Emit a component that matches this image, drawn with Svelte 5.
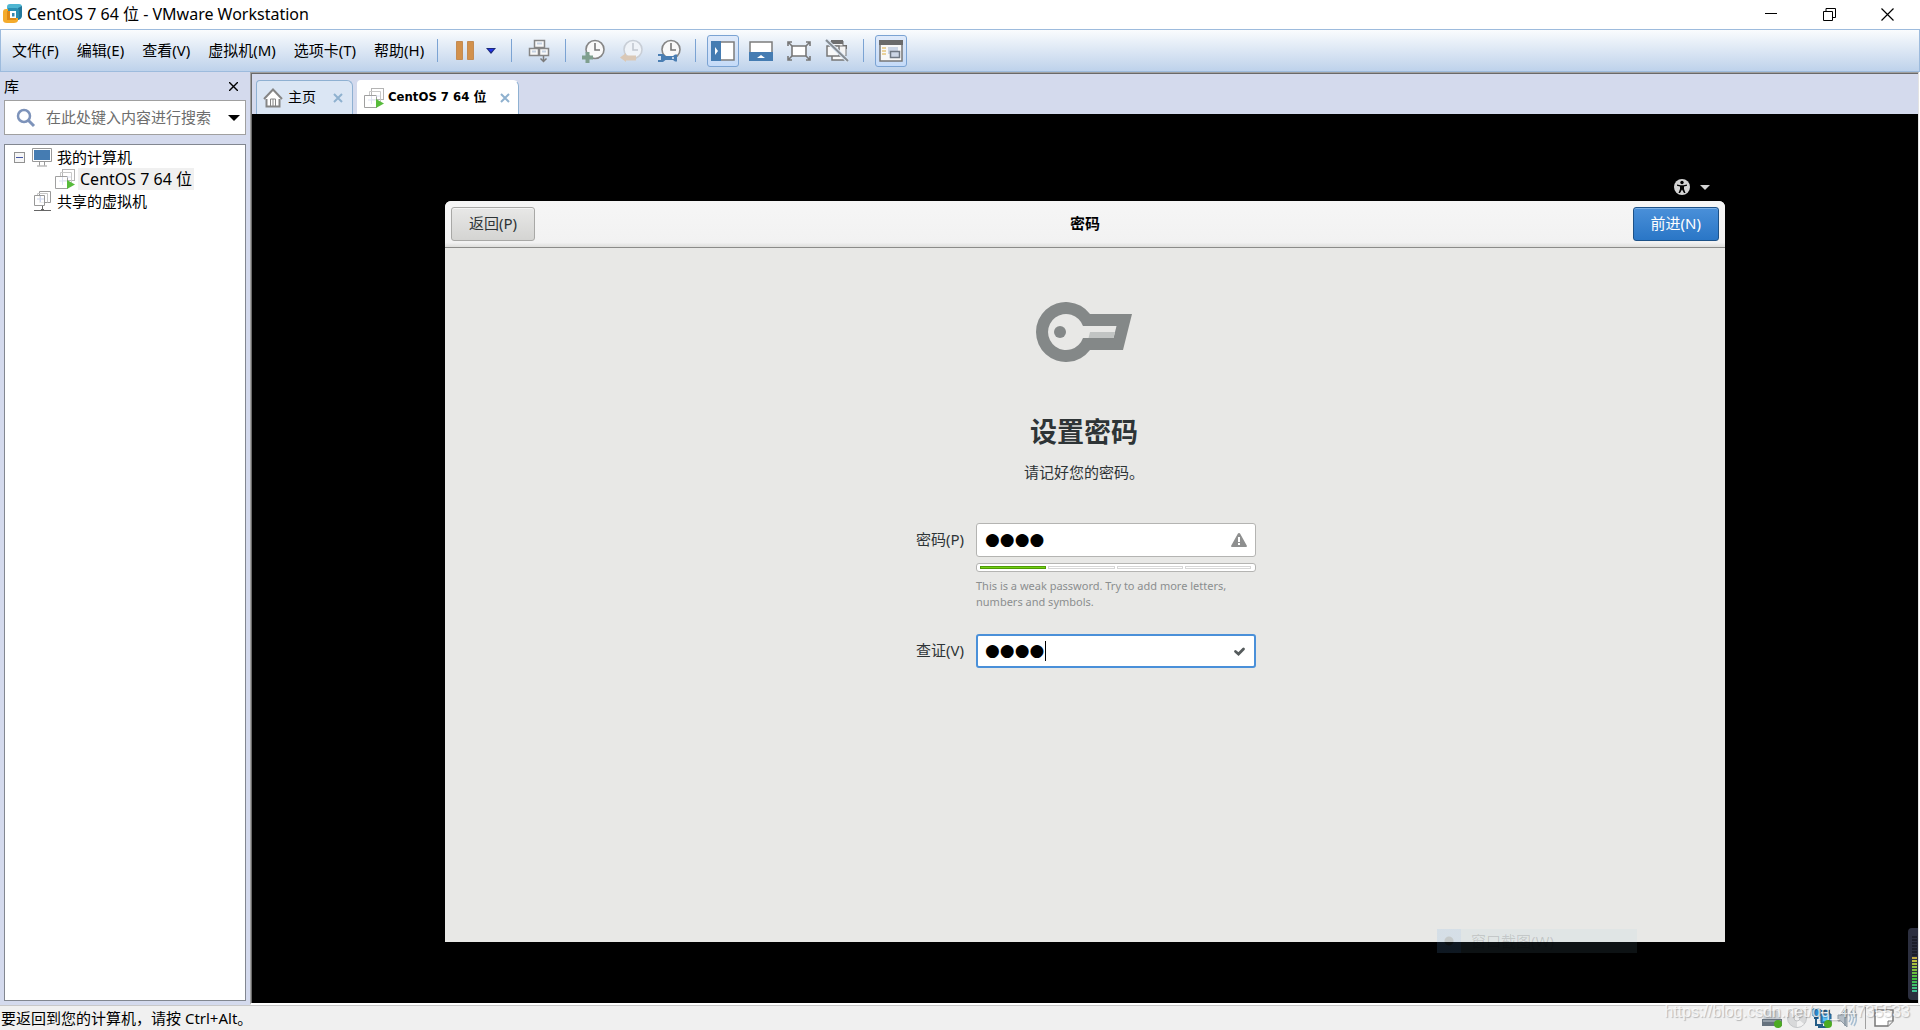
<script lang="ts">
  interface TreeNode {
    label: string;
    icon: 'monitor' | 'vm' | 'shared';
    depth: number;
    expandable?: boolean;
    selected?: boolean;
  }

  const menus = ['文件(F)', '编辑(E)', '查看(V)', '虚拟机(M)', '选项卡(T)', '帮助(H)'];

  const tree: TreeNode[] = [
    { label: '我的计算机', icon: 'monitor', depth: 0, expandable: true },
    { label: 'CentOS 7 64 位', icon: 'vm', depth: 1, selected: true },
    { label: '共享的虚拟机', icon: 'shared', depth: 0 },
  ];

  const strengthSteps = [1, 2, 3, 4];
  const strength = 1;

  // level meter docked at the right edge: dark lines above, lit lines below
  const meter = Array.from({ length: 19 }, (_, i) =>
    i < 7 ? '#1c1e29' : `hsl(${50 + (i - 7) * 10}, 50%, 50%)`
  );

  let search = $state('');
  let password = $state('●●●●');
  let verify = $state('●●●●');
</script>

{#snippet vmIcon()}
  <svg class="vm-icon" width="20" height="20" viewBox="0 0 20 20" fill="none" aria-hidden="true">
    <rect x="7.5" y=".5" width="12" height="11" fill="#fff" stroke="#b4b4b4" />
    <path d="M5.500 8V3.500H16.500V14" stroke="#c8c8c8" />
    <path d="M.5 7.500H12.500V19.500H.5z" fill="#fff" fill-opacity=".8" stroke="#a0a0a0" />
    <path d="M4 12h8M7.500 8v8M12 8h4" stroke="#dde2f2" />
    <path d="M12 11l8 4.500-8 4.500z" fill="#57bb3b" />
  </svg>
{/snippet}

<div class="window">
  <header class="titlebar">
    <svg width="19" height="20" viewBox="0 0 19 20" aria-hidden="true">
      <path d="M7 0h9q3 0 3 3v8q0 4-4 5h-4V5H4V3q0-3 3-3z" fill="#4fb6d2" />
      <path d="M15 4l4-2v9q0 4-4 5z" fill="#23789c" />
      <path d="M3 5h4v9h8v3q-1 2-4 2H4q-4 0-4-3V8q0-3 3-3z" fill="#f4ab2c" />
      <path d="M4 7h9v9H4z" fill="#e08a16" />
      <path d="M5 4h8q3 0 3 3v7h-3V7H5z" fill="#2c8fb2" />
      <path d="M7 7h6v7H7z" fill="#fff" />
      <path d="M9 9h2.500v3.500H9z" fill="#3585ad" />
    </svg>
    <h1>CentOS 7 64 位 - VMware Workstation</h1>
    <div class="window-buttons">
      <button aria-label="最小化"><svg width="12" height="12" viewBox="0 0 12 12"><path d="M0 5.500h12" stroke="#000" /></svg></button>
      <button aria-label="还原"><svg width="13" height="13" viewBox="0 0 13 13" fill="none" stroke="#000"><path d="M.5 3.500h9v9h-9zM3 3V.500h9.500v9H10" /></svg></button>
      <button aria-label="关闭"><svg width="13" height="13" viewBox="0 0 13 13"><path d="M.5.500l12 12M12.500.500l-12 12" stroke="#000" stroke-width="1.200" /></svg></button>
    </div>
  </header>

  <nav class="toolbar">
    <div class="menus">
      {#each menus as menu}
        <button class="menu">{menu}</button>
      {/each}
    </div>
    <span class="sep first"></span>
    <div class="group tight">
      <button class="tool" aria-label="挂起">
        <svg width="18" height="20" viewBox="0 0 18 20"><path d="M.5.500h6v18h-6zM11.500.500h6v18h-6z" fill="#d2914c" stroke="#c48b52" /></svg>
      </button>
      <button class="tool drop" aria-label="电源选项">
        <svg width="10" height="6" viewBox="0 0 10 6"><path d="M0 0h10L5 6z" fill="#1b2a7a" /><path d="M2 1h6L5 4z" fill="#2233ee" /></svg>
      </button>
    </div>
    <span class="sep"></span>
    <button class="tool" aria-label="发送 Ctrl+Alt+Del">
      <svg width="22" height="24" viewBox="0 0 22 24" fill="#f8f8f8" stroke="#868686">
        <path d="M6.500 1.500h10v7h-10zM1.500 9.500h9v7h-9zM11.500 9.500h9v7h-9z" stroke-width="1.500" />
        <path d="M9 4.500h5M4 12.500h4M14 12.500h4" stroke="#c5d2e2" stroke-width="2" />
        <path d="M15.500 17v5M12.500 19.500l3 3 3-3" fill="none" stroke="#7b7b7b" stroke-width="1.500" />
      </svg>
    </button>
    <span class="sep"></span>
    <div class="group">
      <button class="tool" aria-label="拍摄快照">
        <svg width="24" height="24" viewBox="0 0 24 24" fill="none">
          <circle cx="14" cy="10.500" r="9" fill="#f9f9f9" stroke="#858585" stroke-width="1.600" />
          <path d="M14 4v7h5" stroke="#777" stroke-width="1.600" />
          <path d="M4.500 13h4v3.500H12v4H8.500V24h-4v-3.500H1v-4h3.500z" fill="#7f9f8e" />
        </svg>
      </button>
      <button class="tool" aria-label="恢复快照" disabled>
        <svg width="24" height="24" viewBox="0 0 24 24" fill="none">
          <circle cx="14" cy="10.500" r="9" fill="#eff3f8" stroke="#c8ced6" stroke-width="1.600" />
          <path d="M14 4v7h5" stroke="#c2c8d0" stroke-width="1.600" />
          <path d="M1 18.500L7 14v2.500h10v5H7V23z" fill="#dac8b6" />
        </svg>
      </button>
      <button class="tool" aria-label="管理快照">
        <svg width="24" height="24" viewBox="0 0 24 24" fill="none">
          <circle cx="14" cy="10.500" r="9" fill="#f9f9f9" stroke="#858585" stroke-width="1.600" />
          <path d="M14 4v7h5" stroke="#777" stroke-width="1.600" />
          <path d="M1 15h5l2.500 2H16l2-1.500h2v7h-2L16 21H8.500L6 23H1v-2h3v-4H1z" fill="#4a7eb3" />
          <circle cx="16" cy="19" r="1" fill="#e8eff7" />
        </svg>
      </button>
    </div>
    <span class="sep"></span>
    <div class="group">
      <button class="tool active" aria-label="显示库" aria-pressed="true">
        <svg width="24" height="20" viewBox="0 0 24 20"><path d="M1 1h22v18H1z" fill="#fff" stroke="#7c7c7c" stroke-width="1.500" /><path d="M0 0h10v20H0z" fill="#457cb2" /><path d="M4 6l3 4-3 4z" fill="#fff" /></svg>
      </button>
      <button class="tool" aria-label="缩略图栏">
        <svg width="24" height="20" viewBox="0 0 24 20"><path d="M1 1h22v18H1z" fill="#fff" stroke="#7c7c7c" stroke-width="1.500" /><path d="M0 11h24v9H0z" fill="#457cb2" /><path d="M8 17l4-3 4 3z" fill="#fff" /></svg>
      </button>
      <button class="tool" aria-label="全屏">
        <svg width="24" height="20" viewBox="0 0 24 20" fill="none" stroke="#777" stroke-width="1.600">
          <path d="M5 5h14v10H5z" fill="#fff" />
          <path d="M1 5V1h4M19 1h4v4M23 15v4h-4M5 19H1v-4M1 1l4 4M23 1l-4 4M23 19l-4-4M1 19l4-4" />
        </svg>
      </button>
      <button class="tool" aria-label="Unity">
        <svg width="24" height="24" viewBox="0 0 24 24" fill="none">
          <path d="M6 2h12v10H6z" fill="#f4f4f4" stroke="#6e6e6e" /><path d="M6 1h12v4H6zM18 6h4v4h-4z" fill="#6e6e6e" />
          <path d="M9 7h12v10H9z" fill="#f4f4f4" stroke="#777" />
          <path d="M2 7h12v10H2zM7 17h12v4H7z" fill="#f8f8f8" stroke="#777" stroke-width="1.500" />
          <path d="M1 1l22 21" stroke="#dce7f3" stroke-width="4" /><path d="M1 1l22 21" stroke="#858b91" stroke-width="2" />
        </svg>
      </button>
    </div>
    <span class="sep"></span>
    <button class="tool active" aria-label="控制台视图" aria-pressed="true">
      <svg width="24" height="22" viewBox="0 0 24 22" fill="none">
        <path d="M1 1h22v20H1z" fill="#f8f8f8" stroke="#777" stroke-width="1.500" />
        <path d="M0 0h24v5H0z" fill="#6a6a6a" />
        <path d="M3 8h4M3 11h4M3 14h4" stroke="#e5c57c" stroke-width="1.500" />
        <path d="M9 7h10v7H9z" fill="#ccd6e6" />
        <path d="M11.500 11.500h9v6h-9z" fill="#ccd6e6" stroke="#6f7884" stroke-width="1.500" />
      </svg>
    </button>
  </nav>

  <div class="body">
    <aside class="library">
      <div class="library-head">
        <h2>库</h2>
        <button aria-label="关闭库"><svg width="9" height="9" viewBox="0 0 9 9"><path d="M0 0l9 9M9 0L0 9" stroke="#000" stroke-width="1.400" /></svg></button>
      </div>
      <div class="search">
        <svg width="20" height="20" viewBox="0 0 20 20" fill="none" aria-hidden="true">
          <circle cx="8" cy="8" r="6" stroke="#7d93ba" stroke-width="2.500" />
          <path d="M12 12l6 6" stroke="#7d93ba" stroke-width="3" />
        </svg>
        <input type="text" bind:value={search} placeholder="在此处键入内容进行搜索" aria-label="搜索" />
        <button aria-label="搜索选项"><svg width="12" height="6" viewBox="0 0 12 6"><path d="M0 0h12L6 6z" fill="#000" /></svg></button>
      </div>
      <ul class="tree">
        {#each tree as node}
          <li class:child={node.depth > 0}>
            <span class="expander">
              {#if node.expandable}
                <svg width="11" height="11" viewBox="0 0 11 11"><rect x=".5" y=".5" width="10" height="10" fill="#f6f6f6" stroke="#919191" /><path d="M2 5.500h7" stroke="#4455a5" /></svg>
              {/if}
            </span>
            {#if node.icon === 'monitor'}
              <svg width="20" height="20" viewBox="0 0 20 20" fill="none"><path d="M.5 1.500h19v13H.5z" fill="#fff" stroke="#999" /><path d="M2 3h16v10H2z" fill="#457cb2" /><path d="M7.500 15v3.500M12.500 15v3.500M5 19h10" stroke="#999" /></svg>
            {:else if node.icon === 'vm'}
              {@render vmIcon()}
            {:else}
              <svg width="20" height="20" viewBox="0 0 20 20" fill="none"><path d="M7.500.500h11v11h-11z" fill="#fff" stroke="#999" /><path d="M5.500 4V2.500h10v9" stroke="#c8c8c8" /><path d="M2.500 4.500h10v10h-10z" fill="#fff" fill-opacity=".8" stroke="#999" /><path d="M5 8h7M8.500 5v6" stroke="#ccd4ec" /><path d="M10.500 15v3M2 19.500h17M9 18.500h3" stroke="#666" /></svg>
            {/if}
            <span class="label" class:selected={node.selected}>{node.label}</span>
          </li>
        {/each}
      </ul>
    </aside>

    <main class="workspace">
      <div class="tabs" role="tablist">
        <div class="tab">
          <svg width="20" height="20" viewBox="0 0 20 20" fill="none" stroke="#858585"><path d="M3.500 10v8.500h13V10" fill="#fff" stroke-width="2" /><path d="M1 11l9-9.500L19 11" fill="#fff" stroke-width="2" /><path d="M7.500 18v-7h5v7M10 11v7" /></svg>
          <button class="tab-name" role="tab" aria-selected="false">主页</button>
          <button class="tab-close" aria-label="关闭主页"><svg width="10" height="10" viewBox="0 0 10 10"><path d="M1 1l8 8M9 1L1 9" stroke="#8fb1cf" stroke-width="2" /></svg></button>
        </div>
        <div class="tab current">
          {@render vmIcon()}
          <button class="tab-name" role="tab" aria-selected="true">CentOS 7 64 位</button>
          <button class="tab-close" aria-label="关闭 CentOS 7 64 位"><svg width="10" height="10" viewBox="0 0 10 10"><path d="M1 1l8 8M9 1L1 9" stroke="#8fb1cf" stroke-width="2" /></svg></button>
        </div>
      </div>

      <div class="guest">
        <div class="guest-panel">
          <button aria-label="辅助功能">
            <svg width="16" height="16" viewBox="0 0 16 16"><circle cx="8" cy="8" r="8" fill="#d4d4d4" /><circle cx="8" cy="3.500" r="1.700" /><path d="M3 5.500l3.500.700h3L13 5.500v1.300l-3 .700v2.500l1.500 4h-1.500L8 10.500 6 14H4.500L6 10V7.500l-3-.700z" /></svg>
            <svg width="10" height="5" viewBox="0 0 10 5"><path d="M0 0h10L5 5z" fill="#d4d4d4" /></svg>
          </button>
        </div>
        <section class="dialog">
          <header class="dialog-head">
            <button class="btn">返回(P)</button>
            <h2>密码</h2>
            <button class="btn suggested">前进(N)</button>
          </header>
          <div class="page">
            <svg width="96" height="60" viewBox="0 0 96 60" aria-hidden="true">
              <path fill="#848888" fill-rule="evenodd" d="M54 12A30 30 0 1 0 54 48H87L96 12zM47 24H80.500L77.500 36H47A18 18 0 1 1 47 24z" />
              <circle cx="24" cy="30" r="6" fill="#848888" />
              <path d="M54 30h25l-1.500 6H52.500z" fill="#c1c4c3" />
            </svg>
            <h3>设置密码</h3>
            <p class="intro">请记好您的密码。</p>
            <form onsubmit={(e) => e.preventDefault()}>
              <label for="password">密码(P)</label>
              <div class="entry">
                <input id="password" type="text" bind:value={password} />
                <svg width="16" height="14" viewBox="0 0 16 14"><path d="M8 0q.8 0 1.200.8L16 13q0 1-1 1H1q-1 0-1-1L6.800.8Q7.200 0 8 0z" fill="#8e8f8f" /><path d="M7 4h2v5H7zM7 10h2v2H7z" fill="#fff" /></svg>
              </div>
              <div class="feedback">
                <div class="level">
                  {#each strengthSteps as step}
                    <span class:filled={step <= strength}></span>
                  {/each}
                </div>
                <p>This is a weak password. Try to add more letters, numbers and symbols.</p>
              </div>
              <label for="verify">查证(V)</label>
              <div class="entry focused">
                <input id="verify" type="text" bind:value={verify} />
                <span class="caret"></span>
                <svg width="16" height="14" viewBox="0 0 16 14"><path d="M4.500 7.500l3 2.500L12.500 5" fill="none" stroke="#555b5c" stroke-width="2.800" stroke-linecap="round" /></svg>
              </div>
            </form>
          </div>
        </section>
        <div class="ghost-menu"><i></i><span>窗口截图(W)</span></div>
        <div class="meter">
          {#each meter as colour}
            <i style="background: {colour}"></i>
          {/each}
        </div>
      </div>
    </main>
  </div>

  <footer class="statusbar">
    <span>要返回到您的计算机，请按 Ctrl+Alt。</span>
    <div class="devices">
      <button aria-label="硬盘">
        <svg width="20" height="20" viewBox="0 0 20 20"><path d="M4 3h12l3 8H1z" fill="#c9ced3" /><path d="M0 11h20v7H0z" fill="#66727e" /><path d="M1 12h18v2H1z" fill="#929ca6" /><circle cx="16" cy="16" r="4" fill="#4cab22" /></svg>
      </button>
      <button aria-label="光驱">
        <svg width="20" height="20" viewBox="0 0 20 20"><circle cx="10" cy="10" r="9.500" fill="#d8d9da" stroke="#c4c6c8" /><path d="M10 10L3 4a9 9 0 0 1 7-3zM10 10l7 6a9 9 0 0 1-7 3z" fill="#f2f2f2" /><circle cx="10" cy="10" r="3" fill="#eee" stroke="#c0c2c4" /></svg>
      </button>
      <button aria-label="网络">
        <svg width="20" height="20" viewBox="0 0 20 20" fill="none"><path d="M1 1h7v7H1zM9 6h10v9H9z" fill="#2d8bd0" stroke="#255d87" /><path d="M11 8h6v5h-6z" fill="#5cc0f5" /><path d="M4 9v8h7M9 3h8v3M2 10h5M6 19h10" stroke="#255d87" stroke-width="2" /><circle cx="16" cy="16" r="4" fill="#4cab22" /></svg>
      </button>
      <button aria-label="声音">
        <svg width="20" height="20" viewBox="0 0 20 20" fill="none"><path d="M1 7h3l6-6v18l-6-6H1z" fill="#b5bec6" stroke="#8f9ba5" /><path d="M8 2v16" stroke="#738391" /><path d="M12 6q3 4 0 8M14 3q5 7 0 14M17 2q5 8 0 16" stroke="#a8bfd2" stroke-width="1.500" /></svg>
      </button>
      <span class="device-sep"></span>
      <button aria-label="消息日志">
        <svg width="20" height="18" viewBox="0 0 20 18"><path d="M1 1h18v11l-5 5H1z" fill="#fff" stroke="#777" stroke-width="1.500" /><path d="M14 17v-5h5" fill="#eee" stroke="#777" /></svg>
      </button>
    </div>
    <span class="watermark">https://blog.csdn.net/qq_44735533</span>
  </footer>
</div>

<style>
  :global(body) { margin: 0; }
  .window {
    display: flex;
    flex-direction: column;
    height: 100vh;
    overflow: hidden;
    background: #fff;
    color: #000;
    font: 15px/20px "Noto Sans", "Noto Sans CJK SC", sans-serif;
  }
  .window :global(*) { box-sizing: border-box; }
  button {
    display: flex;
    align-items: center;
    justify-content: center;
    padding: 0;
    border: 0;
    background: none;
    color: inherit;
    font: inherit;
    white-space: nowrap;
  }
  h1, h2, h3, p, ul {
    margin: 0;
    padding: 0;
    font: inherit;
  }
  svg { display: block; flex-shrink: 0; }

  .titlebar {
    display: flex;
    align-items: center;
    gap: 5px;
    height: 29px;
    padding: 0 4px 1px 3px;
  }
  .titlebar h1 { font-size: 16px; }
  .window-buttons { display: flex; margin-left: auto; }
  .window-buttons button { width: 58px; height: 28px; }

  .toolbar {
    display: flex;
    align-items: center;
    height: 43px;
    flex-shrink: 0;
    border: 1px solid #9dbbdd;
    background: linear-gradient(#fafcfe, #dfe9f5 45%, #bed2eb);
  }
  .menus { display: flex; padding: 0 0 2px 2px; }
  .menu { padding: 0 9px; }
  .sep {
    width: 1px;
    height: 23px;
    margin: 0 11px 0 10px;
    background: #7ba3d3;
  }
  .sep.first { margin-left: 4px; }
  .group { display: flex; gap: 6px; }
  .group.tight { gap: 0; }
  .tool { width: 32px; height: 32px; }
  .tool.drop { width: 20px; }
  .tool.active {
    border: 1px solid #7ba3d3;
    border-radius: 3px;
    background: linear-gradient(#dfeafa, #c5dbf8);
  }

  .body { display: flex; flex: 1; min-height: 0; }
  .library {
    display: flex;
    flex-direction: column;
    width: 250px;
    padding: 0 4px 4px;
    background: #d4daed;
  }
  .library-head {
    display: flex;
    align-items: center;
    justify-content: space-between;
    height: 28px;
    padding-right: 8px;
  }
  .search {
    display: flex;
    align-items: center;
    height: 35px;
    padding: 0 5px 0 11px;
    border: 1px solid #a0a0a0;
    background: #fff;
  }
  .search input {
    flex: 1;
    min-width: 0;
    padding: 0 0 2px 10px;
    border: 0;
    outline: 0;
    background: none;
    font: inherit;
  }
  .search input::placeholder { color: #6d6d6d; }
  .tree {
    flex: 1;
    margin-top: 9px;
    padding: 1px 9px;
    border: 1px solid #828790;
    background: #fff;
    list-style: none;
  }
  .tree li {
    display: flex;
    align-items: center;
    height: 22px;
  }
  .tree li.child { padding-left: 23px; }
  .expander { width: 18px; }
  .label { margin-left: 3px; padding: 1px 2px; }
  .label.selected { background: #f0f0f0; font-size: 16px; }

  .workspace {
    display: flex;
    flex: 1;
    flex-direction: column;
    min-width: 0;
    margin-right: 1px;
    padding: 1px 0 0 1px;
    border: 1px solid #a0a0a0;
    border-right-color: #e3e3e3;
    border-bottom: 2px solid #fff;
    background: #696969;
  }
  .tabs {
    display: flex;
    align-items: flex-end;
    gap: 4px;
    height: 40px;
    padding-left: 4px;
    background: #d4daed;
  }
  .tab {
    display: flex;
    align-items: center;
    height: 34px;
    padding: 0 9px 0 6px;
    border: 1px solid #8fb1d2;
    border-bottom: 0;
    border-radius: 4px 6px 0 0;
    background: #dbe6f4;
  }
  .tab.current {
    padding: 0 8px 0 6px;
    border-color: #fff #8fb1d2 #fff #fff;
    background: #fff;
  }
  .tab-name { margin: 0 17px 0 5px; padding-bottom: 2px; font-size: 14px; }
  .current .tab-name {
    margin: 0 14px 0 4px;
    font-family: "DejaVu Sans Condensed", "Noto Sans CJK SC", sans-serif;
    font-size: 13px;
    font-weight: 700;
  }

  .guest {
    position: relative;
    display: flex;
    flex: 1;
    flex-direction: column;
    min-height: 0;
    padding: 44px 193px 61px;
    background: #000;
  }
  .guest-panel {
    display: flex;
    justify-content: flex-end;
    height: 43px;
    padding: 21px 15px 0 0;
  }
  .guest-panel button { gap: 10px; height: 16px; }
  .dialog {
    display: flex;
    flex: 1;
    flex-direction: column;
    overflow: hidden;
    border-radius: 6px 6px 0 0;
    background: #e8e8e6;
    color: #2e3436;
  }
  .dialog-head {
    display: grid;
    grid-template-columns: 1fr auto 1fr;
    align-items: start;
    height: 47px;
    padding: 6px;
    border-bottom: 1px solid #8b8b89;
    background: linear-gradient(#f6f6f6, #f2f2f2 90%, #dededc);
  }
  .dialog-head h2 {
    color: #000;
    font-weight: 700;
    line-height: 32px;
  }
  .btn {
    justify-self: start;
    height: 34px;
    padding: 0 17px 2px;
    border: 1px solid #a8a8a6;
    border-radius: 3px;
    background: linear-gradient(#e8e8e7, #d4d4d2);
    box-shadow: inset 0 1px #f5f5f5;
  }
  .btn.suggested {
    justify-self: end;
    border-color: #1c5187;
    background: linear-gradient(#4a90d9, #2a76c6);
    box-shadow: inset 0 1px #7db1e8;
    color: #fff;
  }
  .page {
    display: flex;
    flex-direction: column;
    align-items: center;
    padding: 54px 2px 0 0;
  }
  h3 {
    margin-top: 52px;
    font-size: 27px;
    font-weight: 700;
    line-height: 36px;
  }
  .intro { margin-top: 10px; line-height: 24px; }
  form {
    display: grid;
    grid-template-columns: 52px 280px;
    column-gap: 12px;
    align-items: center;
    margin-top: 39px;
  }
  label {
    padding-bottom: 2px;
    text-align: right;
    white-space: nowrap;
  }
  .entry {
    position: relative;
    display: flex;
    align-items: center;
    height: 34px;
    padding: 0 8px;
    border: 1px solid #b4b4b2;
    border-radius: 3px;
    background: #fff;
  }
  .entry.focused { padding: 0 7px; border: 2px solid #4a90d9; }
  .entry input {
    flex: 1;
    min-width: 0;
    height: 24px;
    padding: 0 0 2px;
    border: 0;
    outline: 0;
    background: none;
    color: #000;
    font: 17px/22px "DejaVu Sans", sans-serif;
  }
  .caret {
    position: absolute;
    top: 5px;
    left: 67px;
    width: 1px;
    height: 20px;
    background: #000;
  }
  .feedback { grid-column: 2; padding: 6px 0 24px; }
  .level {
    display: flex;
    gap: 2px;
    padding: 2px 4px 2px 3px;
    border: 1px solid #b4b4b2;
    border-radius: 3px;
    background: #fff;
  }
  .level span {
    flex: 1;
    height: 3px;
    border: 1px solid #d6d6d6;
  }
  .level .filled { border-color: #4e9a06; background: #73d216; }
  .feedback p {
    margin-top: 6px;
    color: #8b8e8f;
    font-size: 11px;
    line-height: 16px;
  }

  .ghost-menu {
    position: absolute;
    right: 281px;
    bottom: 50px;
    display: flex;
    align-items: center;
    width: 200px;
    height: 24px;
    background: rgba(140, 205, 225, 0.09);
    color: rgba(0, 0, 0, 0.14);
  }
  .ghost-menu i {
    width: 24px;
    height: 24px;
    margin-right: 10px;
    background: radial-gradient(circle, rgba(0, 0, 0, 0.12) 4px, rgba(40, 120, 255, 0.06) 5px);
  }
  .meter {
    position: absolute;
    right: 0;
    bottom: 3px;
    display: flex;
    flex-direction: column;
    justify-content: flex-end;
    gap: 1px;
    width: 10px;
    height: 72px;
    padding: 0 1px 8px 4px;
    border-radius: 4px 0 0 4px;
    background: #2c2f3f;
  }
  .meter i { height: 2px; }

  .statusbar {
    position: relative;
    display: flex;
    align-items: center;
    justify-content: space-between;
    height: 25px;
    flex-shrink: 0;
    padding: 0 26px 0 1px;
    border-top: 1px solid #c8c8c8;
    background: #f0f0f0;
  }
  .devices { display: flex; align-items: center; gap: 5px; }
  .device-sep {
    width: 1px;
    height: 22px;
    margin: 0 3px;
    background: #a0a0a0;
  }
  .watermark {
    position: absolute;
    top: -4px;
    right: 10px;
    color: rgba(255, 255, 255, 0.75);
    font: 16px/20px "Liberation Sans", sans-serif;
    text-shadow: 1px 1px 1px rgba(0, 0, 0, 0.25);
  }
</style>
